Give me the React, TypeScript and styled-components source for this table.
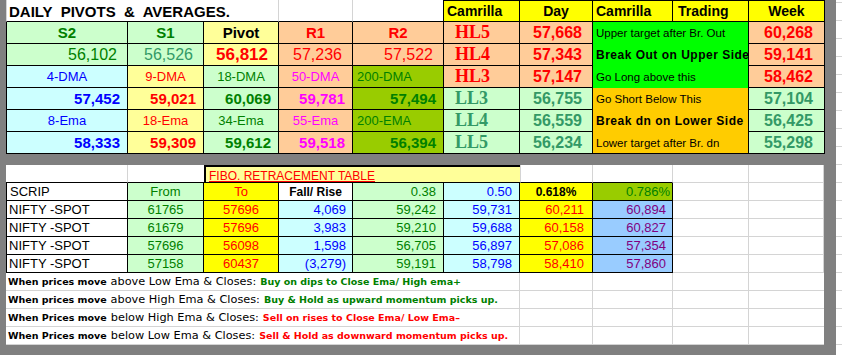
import styled, { createGlobalStyle } from "styled-components";

const GlobalStyle = createGlobalStyle`
  html, body {
    margin: 0;
    padding: 0;
    background: #ffffff;
  }
  body {
    font-family: "Liberation Sans", Arial, sans-serif;
  }
`;

// excel palette
const mint = "#ccffcc";
const cream = "#ffff99";
const peach = "#ffcc99";
const ice = "#ccffff";
const olive = "#99cc00";
const lime = "#00ff00";
const gold = "#ffcc00";
const yellow = "#ffff00";
const sky = "#99ccff";
const green = "#008000";
const teal = "#339966";
const red = "#ff0000";
const blue = "#0000ff";
const pink = "#ff00ff";
const purple = "#800080";
const grid = "#d4d4d4";

type CellProps = {
  $bg?: string;
  $fg?: string;
  $align?: "left" | "center" | "right";
  $pl?: number;
  $pr?: number;
  $size?: number;
  $bold?: boolean;
  $serif?: boolean;
  $span?: number;
  $l?: string;
  $t?: string;
  $r?: string;
  $b?: string;
};

const edge = (v?: string, fallback = "#000") =>
  v === "none" ? "none" : `1px solid ${v ?? fallback}`;

const Cell = styled.div<CellProps>`
  box-sizing: border-box;
  display: flex;
  align-items: center;
  justify-content: ${(p) =>
    p.$align === "right" ? "flex-end" : p.$align === "center" ? "center" : "flex-start"};
  padding: 0 ${(p) => p.$pr ?? 0}px 0 ${(p) => p.$pl ?? 0}px;
  grid-column: span ${(p) => p.$span ?? 1};
  background: ${(p) => p.$bg ?? "#ffffff"};
  color: ${(p) => p.$fg ?? "#000"};
  font-family: ${(p) =>
    p.$serif ? `"Liberation Serif", "Times New Roman", serif` : `"Liberation Sans", Arial, sans-serif`};
  font-size: ${(p) => p.$size ?? 13}px;
  font-weight: ${(p) => (p.$bold ? 700 : 400)};
  white-space: pre;
  border-left: ${(p) => (p.$l ? edge(p.$l) : "none")};
  border-top: ${(p) => (p.$t ? edge(p.$t) : "none")};
  border-right: ${(p) => edge(p.$r)};
  border-bottom: ${(p) => edge(p.$b)};
`;

const Page = styled.div`
  display: flex;
  height: 355px;
  overflow: hidden;
`;

const Frame = styled.div`
  flex: none;
  width: 836px;
  box-sizing: border-box;
  padding-left: 6px;
  background: #808080;
  display: flex;
  flex-direction: column;
  gap: 11px;
`;

const Margin = styled.div`
  flex: 1;
  background: repeating-linear-gradient(
    to bottom,
    #ffffff 0 2px,
    ${grid} 2px 3px,
    #ffffff 3px 18px
  );
`;

const TopGrid = styled.div`
  display: grid;
  grid-template-columns: 122px 76px 75px 74px 91px 76px 73px 80px 76px 76px;
  grid-auto-rows: 22px;
  width: 819px;
`;

const BottomGrid = styled.div`
  display: grid;
  grid-template-columns: 122px 76px 75px 74px 91px 76px 73px 80px 76px 75px;
  grid-auto-rows: 18px;
  width: 818px;
  background: #ffffff;
`;

const Title = styled(Cell)`
  padding-top: 2px;
`;

const Fibo = styled(Cell)`
  border-top: 2px solid #000;
  border-left: 2px solid #000;
  text-decoration: underline;
  padding-top: 2px;
`;

const Note = styled(Cell)`
  gap: 4px;
`;

const Lead = styled.span`
  font-family: "DejaVu Sans", Verdana, sans-serif;
  font-weight: 700;
  font-size: 9.5px;
`;

const Cond = styled.span`
  font-family: "DejaVu Sans", Verdana, sans-serif;
  font-size: 11.3px;
`;

const Action = styled.span<{ $fg: string }>`
  font-family: "DejaVu Sans", Verdana, sans-serif;
  font-weight: 700;
  font-size: 9.5px;
  color: ${(p) => p.$fg};
`;

type Cam = { tag: string; day: string; note: string; bold: boolean; week: string; high: boolean };

const cams: Cam[] = [
  { tag: "HL5", day: "57,668", note: "Upper target after Br. Out", bold: false, week: "60,268", high: true },
  { tag: "HL4", day: "57,343", note: "Break Out on Upper Side", bold: true, week: "59,141", high: true },
  { tag: "HL3", day: "57,147", note: "Go Long above this", bold: false, week: "58,462", high: true },
  { tag: "LL3", day: "56,755", note: "Go Short Below This", bold: false, week: "57,104", high: false },
  { tag: "LL4", day: "56,559", note: "Break dn on Lower Side", bold: true, week: "56,425", high: false },
  { tag: "LL5", day: "56,234", note: "Lower target after Br. dn", bold: false, week: "55,298", high: false },
];

const avgCols = [
  { bg: ice, fg: blue },
  { bg: cream, fg: red },
  { bg: mint, fg: green },
  { bg: peach, fg: pink },
  { bg: olive, fg: green },
];

const dma = { labels: ["4-DMA", "9-DMA", "18-DMA", "50-DMA", "200-DMA"], values: ["57,452", "59,021", "60,069", "59,781", "57,494"] };
const ema = { labels: ["8-Ema", "18-Ema", "34-Ema", "55-Ema", "200-EMA"], values: ["58,333", "59,309", "59,612", "59,518", "56,394"] };

const fibRows = [
  ["61765", "57696", "4,069", "59,242", "59,731", "60,211", "60,894"],
  ["61679", "57696", "3,983", "59,210", "59,688", "60,158", "60,827"],
  ["57696", "56098", "1,598", "56,705", "56,897", "57,086", "57,354"],
  ["57158", "60437", "(3,279)", "59,191", "58,798", "58,410", "57,860"],
];

const notes = [
  { lead: "When prices move", cond: "above Low Ema & Closes:", act: "Buy on dips to Close Ema/ High ema+", fg: green },
  { lead: "When prices move", cond: "above High Ema & Closes:", act: "Buy & Hold as upward momentum picks up.", fg: green },
  { lead: "When Prices move", cond: "below High Ema & Closes:", act: "Sell on rises to Close Ema/ Low Ema\u2013", fg: red },
  { lead: "When Prices move", cond: "below Low Ema & Closes:", act: "Sell & Hold as downward momentum picks up.", fg: red },
];

function camCells(c: Cam, i: number) {
  const bg = c.high ? peach : mint;
  const fg = c.high ? red : teal;
  const tradeBg = c.high ? lime : gold;
  return [
    <Cell key="tag" $bg={bg} $fg={fg} $serif $bold $size={18} $pl={11}>
      {c.tag}
    </Cell>,
    <Cell key="day" $bg={bg} $fg={fg} $bold $size={16} $align="right" $pr={10}>
      {c.day}
    </Cell>,
    <Cell
      key="note"
      $span={2}
      $bg={tradeBg}
      $bold={c.bold}
      $size={c.bold ? 12 : 11.5}
      $pl={3}
      $b={i === 5 ? "#000" : "none"}
      style={c.bold ? { letterSpacing: "0.5px" } : undefined}
    >
      {c.note}
    </Cell>,
    <Cell key="week" $bg={bg} $fg={fg} $bold $size={16} $align="right" $pr={11}>
      {c.week}
    </Cell>,
  ];
}

function AverageLabels({ labels }: { labels: string[] }) {
  return (
    <>
      {labels.map((l, i) =>
        i === 4 ? (
          <Cell key={l} $bg={avgCols[i].bg} $fg={avgCols[i].fg} $pl={4}>
            {l}
          </Cell>
        ) : (
          <Cell key={l} $l={i === 0 ? "#000" : undefined} $bg={avgCols[i].bg} $fg={avgCols[i].fg} $align="center">
            {l}
          </Cell>
        ),
      )}
    </>
  );
}

function AverageValues({ values }: { values: string[] }) {
  return (
    <>
      {values.map((v, i) => (
        <Cell
          key={v + i}
          $l={i === 0 ? "#000" : undefined}
          $bg={avgCols[i].bg}
          $fg={avgCols[i].fg}
          $bold
          $size={15}
          $align="right"
          $pr={7}
        >
          {v}
        </Cell>
      ))}
    </>
  );
}

export default function App() {
  return (
    <Page>
      <GlobalStyle />
      <Frame>
        <TopGrid>
          {/* row 0 */}
          <Title $span={3} $l={grid} $r={grid} $size={15} $bold $pl={2}>
            {"DAILY  PIVOTS  &  AVERAGES."}
          </Title>
          <Cell $r={grid} />
          <Cell />
          <Cell $t="#000" $bg={yellow} $bold $size={14} $pl={3}>
            Camrilla
          </Cell>
          <Cell $t="#000" $bg={yellow} $bold $size={14} $align="center">
            Day
          </Cell>
          <Cell $t="#000" $bg={yellow} $bold $size={14} $pl={3}>
            Camrilla
          </Cell>
          <Cell $t="#000" $bg={yellow} $bold $size={14} $pl={5}>
            Trading
          </Cell>
          <Cell $t="#000" $bg={yellow} $bold $size={14} $align="center">
            Week
          </Cell>

          {/* row 1: pivot headers */}
          <Cell $l="#000" $bg={mint} $fg={green} $bold $size={15} $align="center">S2</Cell>
          <Cell $bg={mint} $fg={green} $bold $size={15} $align="center">S1</Cell>
          <Cell $bg={cream} $bold $size={15} $align="center">Pivot</Cell>
          <Cell $bg={peach} $fg={red} $bold $size={15} $align="center">R1</Cell>
          <Cell $bg={peach} $fg={red} $bold $size={15} $align="center">R2</Cell>
          {camCells(cams[0], 0)}

          {/* row 2: pivot values */}
          <Cell $l="#000" $bg={mint} $fg={green} $size={16} $align="right" $pr={10}>56,102</Cell>
          <Cell $bg={mint} $fg={teal} $size={16} $align="right" $pr={10}>56,526</Cell>
          <Cell $bg={cream} $fg={red} $bold $size={17} $align="right" $pr={10}>56,812</Cell>
          <Cell $bg={peach} $fg={red} $size={16} $align="right" $pr={10}>57,236</Cell>
          <Cell $bg={peach} $fg={red} $size={16} $align="right" $pr={10}>57,522</Cell>
          {camCells(cams[1], 1)}

          <AverageLabels labels={dma.labels} />
          {camCells(cams[2], 2)}
          <AverageValues values={dma.values} />
          {camCells(cams[3], 3)}
          <AverageLabels labels={ema.labels} />
          {camCells(cams[4], 4)}
          <AverageValues values={ema.values} />
          {camCells(cams[5], 5)}
        </TopGrid>

        <BottomGrid>
          {/* row A */}
          <Cell $r={grid} />
          <Cell $r="none" />
          <Fibo $span={4} $bg={cream} $fg={red} $size={12} $pl={3} $r="none">
            FIBO. RETRACEMENT TABLE
          </Fibo>
          <Cell $r={grid} $l={grid} />
          <Cell $r={grid} />
          <Cell $r={grid} $b={grid} />
          <Cell $r={grid} $b={grid} />

          {/* row B */}
          <Cell $l="#000" $size={13} $pl={3}>SCRIP</Cell>
          <Cell $bg={mint} $fg={green} $align="center">From</Cell>
          <Cell $bg={yellow} $fg={red} $align="center">To</Cell>
          <Cell $bold $size={12} $align="center">Fall/ Rise</Cell>
          <Cell $bg={mint} $fg={green} $align="right" $pr={7}>0.38</Cell>
          <Cell $bg={ice} $fg={blue} $align="right" $pr={7}>0.50</Cell>
          <Cell $bg={yellow} $bold $size={12} $align="center">0.618%</Cell>
          <Cell $bg={olive} $fg={green} $align="right" $pr={2}>0.786%</Cell>
          <Cell $r={grid} $b={grid} />
          <Cell $r={grid} $b={grid} />

          {fibRows.map((r, i) => (
            <Row key={i} values={r} />
          ))}

          {notes.map((n) => (
            <NoteLine key={n.act} {...n} />
          ))}
        </BottomGrid>
      </Frame>
      <Margin />
    </Page>
  );
}

function Row({ values }: { values: string[] }) {
  const [from, to, fall, a, b, c, d] = values;
  return (
    <>
      <Cell $l="#000" $size={13} $pl={2}>NIFTY -SPOT</Cell>
      <Cell $bg={mint} $fg={green} $align="center">{from}</Cell>
      <Cell $bg={yellow} $fg={red} $align="center">{to}</Cell>
      <Cell $bg={ice} $fg={blue} $align="right" $pr={6}>{fall}</Cell>
      <Cell $bg={mint} $fg={green} $align="right" $pr={7}>{a}</Cell>
      <Cell $bg={ice} $fg={blue} $align="right" $pr={7}>{b}</Cell>
      <Cell $bg={yellow} $fg={red} $align="right" $pr={8}>{c}</Cell>
      <Cell $bg={sky} $fg={purple} $align="right" $pr={6}>{d}</Cell>
      <Cell $r={grid} $b={grid} />
      <Cell $r={grid} $b={grid} />
    </>
  );
}

function NoteLine({ lead, cond, act, fg }: { lead: string; cond: string; act: string; fg: string }) {
  return (
    <>
      <Note $span={6} $r={grid} $b={grid} $pl={2}>
        <Lead>{lead}</Lead>
        <Cond>{cond}</Cond>
        <Action $fg={fg}>{act}</Action>
      </Note>
      <Cell $r={grid} $b={grid} />
      <Cell $r={grid} $b={grid} />
      <Cell $r={grid} $b={grid} />
      <Cell $r="none" $b={grid} />
    </>
  );
}
